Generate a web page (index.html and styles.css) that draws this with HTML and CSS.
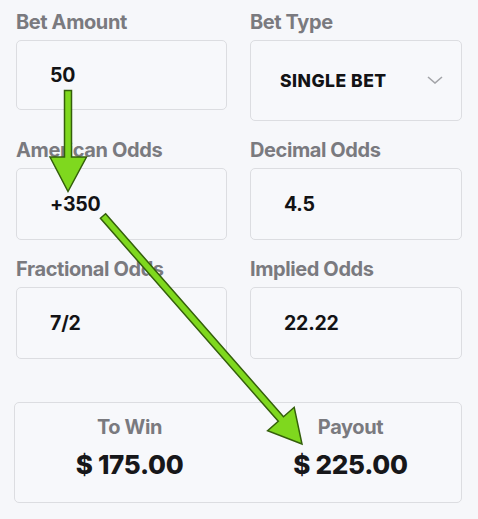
FILE: index.html
```html
<!DOCTYPE html>
<html lang="en">
<head>
<meta charset="utf-8">
<title>Odds Calculator</title>
<link rel="stylesheet" href="styles.css">
</head>
<body>
<div class="calc">
  <div class="fields">
    <div class="field">
      <div class="label">Bet Amount</div>
      <div class="box box-short">50</div>
    </div>
    <div class="field">
      <div class="label">Bet Type</div>
      <div class="box select">
        <span class="select-text">SINGLE BET</span>
        <svg class="chevron" width="16" height="8" viewBox="0 0 16 8"><polyline points="1,1 8,7 15,1" fill="none" stroke="#a3a4a8" stroke-width="1.6"/></svg>
      </div>
    </div>
    <div class="field">
      <div class="label">American Odds</div>
      <div class="box">+350</div>
    </div>
    <div class="field">
      <div class="label">Decimal Odds</div>
      <div class="box">4.5</div>
    </div>
    <div class="field">
      <div class="label">Fractional Odds</div>
      <div class="box">7/2</div>
    </div>
    <div class="field">
      <div class="label">Implied Odds</div>
      <div class="box">22.22</div>
    </div>
  </div>

  <div class="result">
    <div class="result-col">
      <div class="result-label">To Win</div>
      <div class="result-value">$ 175.00</div>
    </div>
    <div class="result-col">
      <div class="result-label">Payout</div>
      <div class="result-value">$ 225.00</div>
    </div>
  </div>

  <!-- annotation arrows drawn over the form -->
  <svg class="arrows" width="478" height="519" viewBox="0 0 478 519">
    <polygon points="64.5,90.5 71.5,90.5 71.5,157 86.5,157 68,191.5 50,157 64.5,157" fill="#7fd81e" stroke="#345f0b" stroke-width="1.5" stroke-linejoin="miter"/>
    <polygon points="105.6,213.7 283.5,416.7 294.2,407.3 302,444 267.6,430.7 278.3,421.3 100.4,218.3" fill="#7fd81e" stroke="#345f0b" stroke-width="1.5" stroke-linejoin="miter"/>
  </svg>
</div>
</body>
</html>
```

FILE: styles.css
```css
* {
  box-sizing: border-box;
}

html,
body {
  margin: 0;
  background: #f6f7fa;
}

body {
  font-family: Inter, "Noto Sans", "Liberation Sans", sans-serif;
  color: #151517;
}

.calc {
  position: relative;
  width: 478px;
  height: 519px;
  padding: 10px 16px 0 16px;
  overflow: hidden;
}

.fields {
  display: grid;
  grid-template-columns: 211px 212px;
  column-gap: 23px;
  row-gap: 17px;
  align-items: start;
}

.label {
  font-size: 20px;
  line-height: 24px;
  font-weight: 700;
  letter-spacing: -0.4px;
  color: #7a7a7f;
  margin-bottom: 6px;
  white-space: nowrap;
}

.box {
  height: 72px;
  display: flex;
  align-items: center;
  padding-left: 33px;
  border: 1px solid #dcdde1;
  border-radius: 5px;
  background: #f7f8fb;
  font-size: 19.5px;
  font-weight: 700;
  letter-spacing: -0.2px;
  color: #131315;
}

.box-short {
  height: 70px;
}

.select {
  height: 81px;
  justify-content: space-between;
  padding-left: 29px;
  padding-right: 18px;
}

.select-text {
  font-size: 17.5px;
  font-weight: 800;
  letter-spacing: 0.5px;
}

.chevron {
  display: block;
  margin-top: -2px;
}

.result {
  display: grid;
  grid-template-columns: 1fr 1fr;
  margin: 43px 0 0 -2px;
  height: 101px;
  padding: 12px 0 0 4px;
  border: 1px solid #dcdde1;
  border-radius: 5px;
  background: #f7f8fb;
}

.result-col {
  display: flex;
  flex-direction: column;
  align-items: center;
}

.result-label {
  font-size: 20px;
  line-height: 24px;
  font-weight: 700;
  letter-spacing: -0.4px;
  color: #7a7a7f;
}

.result-value {
  margin-top: 10px;
  font-size: 26px;
  line-height: 32px;
  font-weight: 800;
  letter-spacing: -0.3px;
  color: #17171a;
}

.arrows {
  position: absolute;
  left: 0;
  top: 0;
  pointer-events: none;
}
```
